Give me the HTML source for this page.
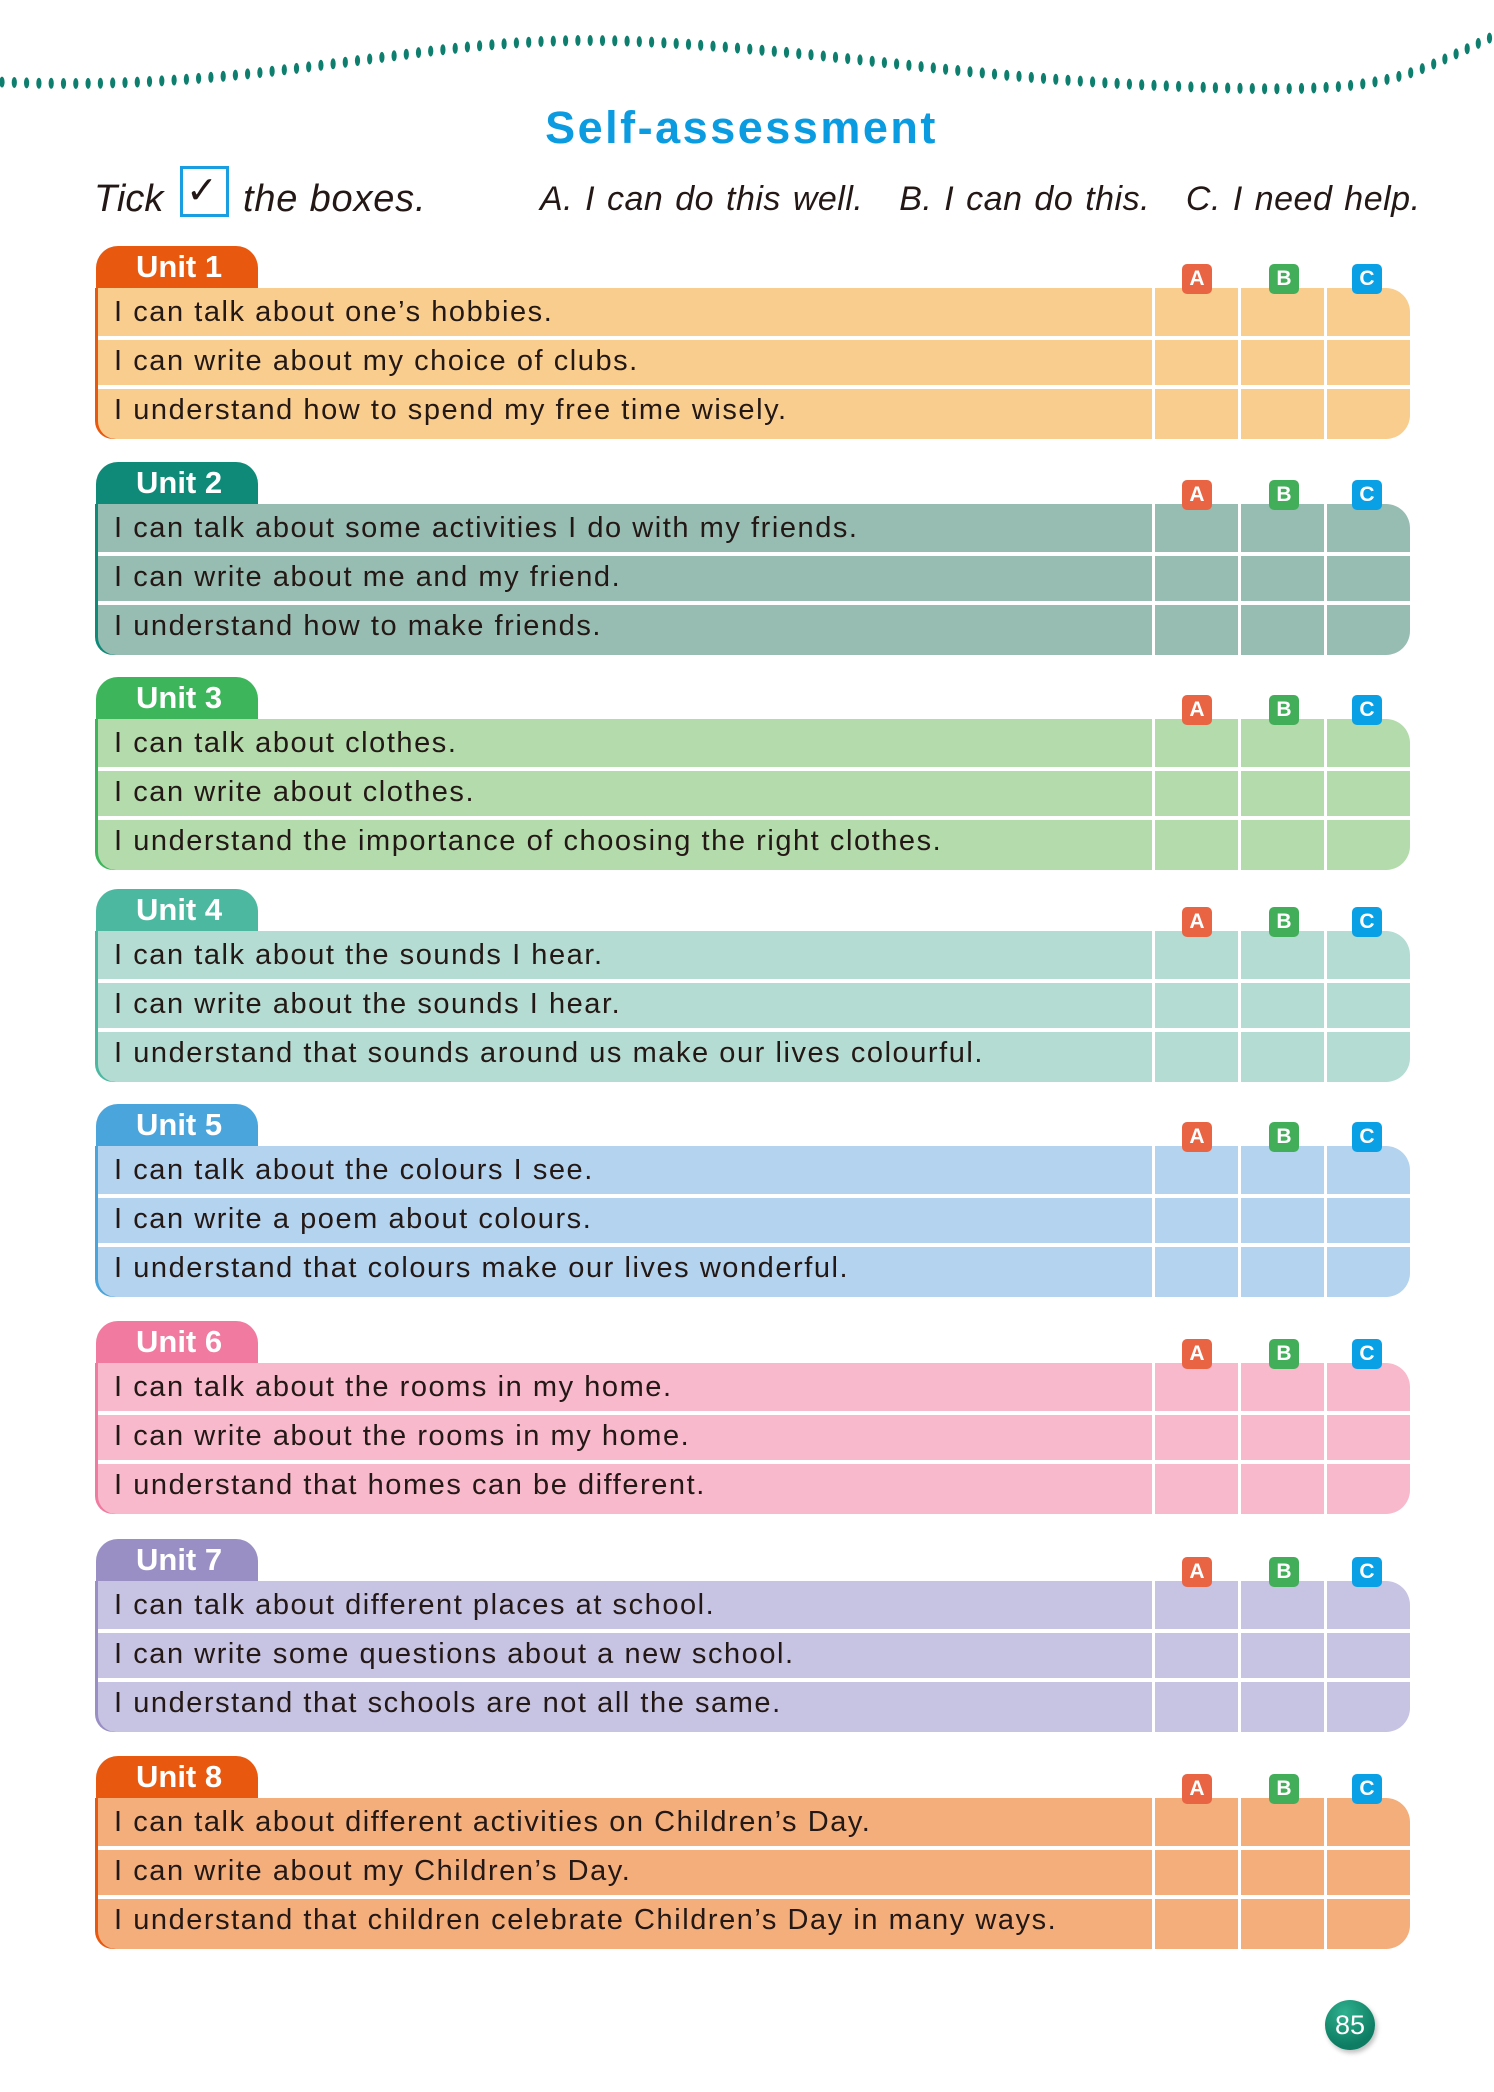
<!DOCTYPE html>
<html><head><meta charset="utf-8"><style>
*{margin:0;padding:0;box-sizing:border-box}
body{width:1494px;height:2092px;background:#fff;position:relative;overflow:hidden;font-family:"Liberation Sans","DejaVu Sans",sans-serif;color:#231815}
.title{position:absolute;left:536px;width:411px;top:102px;text-align:center;font-weight:bold;font-size:45px;color:#0a9be0;letter-spacing:2.5px;white-space:nowrap}
.tick{position:absolute;top:178px;font-style:italic;font-size:38px;}
.box{position:absolute;left:180px;top:166px;width:49px;height:51px;border:3px solid #1a9ee2;}
.unit{position:absolute;left:96px;width:1316px;height:195px}
.tab{position:absolute;left:0;top:0;width:162px;height:60px;border-radius:22px 22px 0 0;color:#fff;font-weight:bold;font-size:31px;padding:3px 0 0 40px}
.tbl{position:absolute;left:2px;top:42px;width:1312px;height:151px;border-radius:0 24px 24px 18px;overflow:hidden}
.row{position:absolute;left:0;width:1312px;height:49px;font-size:29px;letter-spacing:1.55px;padding:8px 0 0 16px;white-space:nowrap}
.hl{position:absolute;left:0;width:1312px;height:4px;background:#fff}
.vl{position:absolute;top:0;height:151px;width:3px;background:#fff}
.bd{position:absolute;top:18px;width:30px;height:30px;border-radius:5px;color:#fff;font-weight:bold;font-size:21px;text-align:center;line-height:30px}
.pn{position:absolute;left:1325px;top:2000px;width:50px;height:50px;border-radius:50%;background:radial-gradient(circle at 40% 25%,#2fb08e,#0d7c62 70%);color:#fff;font-size:27px;text-align:center;line-height:50px;box-shadow:2px 3px 5px rgba(0,0,0,.25)}
</style></head><body>
<svg id="wave" style="position:absolute;left:0;top:0" width="1494" height="120">
<path id="wp" d="M0 82 C 150 88, 250 75, 400 55 S 620 38, 760 50 S 1000 80, 1194 87 S 1400 80, 1494 36" fill="none" stroke="none"/>
</svg>
<div class="title">Self-assessment</div>
<div class="tick" style="left:94px">Tick</div>
<div class="box"></div><div class="tick" style="left:186px;top:168px;font-style:normal;font-size:38px">✓</div>
<div class="tick" style="left:243px;letter-spacing:0.8px">the boxes.</div>
<div class="tick" style="left:540px;font-size:34px;top:180px;word-spacing:2px;letter-spacing:0.5px">A. I can do this well.&nbsp;&nbsp; B. I can do this.&nbsp;&nbsp; C. I need help.</div>

<div id="units"></div>
<script>
var p=document.getElementById("wp"),L=p.getTotalLength(),s="";
for(var d=2;d<L;d+=12.3){var q=p.getPointAtLength(d);s+='<ellipse cx="'+q.x.toFixed(1)+'" cy="'+q.y.toFixed(1)+'" rx="2.6" ry="5.5" fill="#0e7f6e"/>';}
document.getElementById("wave").insertAdjacentHTML("beforeend",s);
var U=[
["Unit 1",246,"#e8580e","#f9cd8e",["I can talk about one’s hobbies.","I can write about my choice of clubs.","I understand how to spend my free time wisely."]],
["Unit 2",462,"#0f8a78","#97bdb3",["I can talk about some activities I do with my friends.","I can write about me and my friend.","I understand how to make friends."]],
["Unit 3",677,"#3db55a","#b3dbac",["I can talk about clothes.","I can write about clothes.","I understand the importance of choosing the right clothes."]],
["Unit 4",889,"#4db8a0","#b5dcd2",["I can talk about the sounds I hear.","I can write about the sounds I hear.","I understand that sounds around us make our lives colourful."]],
["Unit 5",1104,"#4aa5dc","#b4d3ee",["I can talk about the colours I see.","I can write a poem about colours.","I understand that colours make our lives wonderful."]],
["Unit 6",1321,"#f07aa0","#f8b9cc",["I can talk about the rooms in my home.","I can write about the rooms in my home.","I understand that homes can be different."]],
["Unit 7",1539,"#9a8fc4","#c7c3e2",["I can talk about different places at school.","I can write some questions about a new school.","I understand that schools are not all the same."]],
["Unit 8",1756,"#e8580e","#f3ae7b",["I can talk about different activities on Children’s Day.","I can write about my Children’s Day.","I understand that children celebrate Children’s Day in many ways."]]];
var h="";
U.forEach(function(u){
h+='<div class="unit" style="top:'+u[1]+'px"><div class="tab" style="background:'+u[2]+'">'+u[0]+'</div><div class="tbl" style="background:'+u[3]+';box-shadow:-3px 0 0 '+u[2]+'">';
u[4].forEach(function(t,i){h+='<div class="row" style="top:'+(i*49)+'px">'+t+'</div>'});
h+='<div class="hl" style="top:48px"></div><div class="hl" style="top:97px"></div>';
h+='<div class="vl" style="left:1054px"></div><div class="vl" style="left:1140px"></div><div class="vl" style="left:1226px"></div></div>';
h+='<div class="bd" style="left:1086px;background:#e96443">A</div><div class="bd" style="left:1173px;background:#43ae5a">B</div><div class="bd" style="left:1256px;background:#0aa0e6">C</div></div>';
});
document.getElementById("units").innerHTML=h;
</script>
<div class="pn">85</div>
</body></html>
